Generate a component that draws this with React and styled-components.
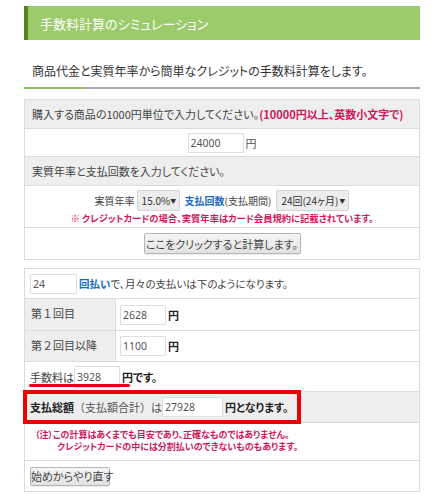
import React from 'react'
import styled, { createGlobalStyle } from 'styled-components'

const GlobalStyle = createGlobalStyle`
    body {
        margin: 0;
        background: #fff;
        font-family: "Noto Sans CJK JP", "Noto Sans", sans-serif;
        color: #444;
    }
`

function App() {
    return (
        <>
            <GlobalStyle />
            <Page>
                <Title>手数料計算のシミュレーション</Title>
                <Lead>商品代金と実質年率から簡単なクレジットの手数料計算をします。</Lead>
                <Bar />

                <Panel>
                    <Row $head $h={29}>
                        購入する商品の1000円単位で入力してください。<Warn>(10000円以上、英数小文字で)</Warn>
                    </Row>
                    <Row $center $h={28}>
                        <Field $w={56} defaultValue="24000" />
                        <Unit>円</Unit>
                    </Row>
                    <Row $head $h={29}>実質年率と支払回数を入力してください。</Row>
                    <StackRow $h={42}>
                        <Line>
                            <span>実質年率</span>
                            <SelectBox $w={43}>15.0%<Arrow>▼</Arrow></SelectBox>
                            <Period><Link>支払回数</Link>(支払期間)</Period>
                            <SelectBox $w={73}>24回(24ヶ月)<Arrow>▼</Arrow></SelectBox>
                        </Line>
                        <Note $size={9.3}>※ クレジットカードの場合、実質年率はカード会員規約に記載されています。</Note>
                    </StackRow>
                    <Row $center $h={31} $last>
                        <Button $w={157} $h={21}>ここをクリックすると計算します。</Button>
                    </Row>
                </Panel>

                <Panel $gap={8}>
                    <Row $h={30} $pad={5} $size={10.5}>
                        <Field $w={47} defaultValue="24" />
                        <Link>回払い</Link>で、月々の支払いは下のようになります。
                    </Row>
                    <SplitRow $h={32}>
                        <LabelCell>第１回目</LabelCell>
                        <ValueCell>
                            <Field $w={46} defaultValue="2628" />
                            <Strong>円</Strong>
                        </ValueCell>
                    </SplitRow>
                    <SplitRow $h={31}>
                        <LabelCell>第２回目以降</LabelCell>
                        <ValueCell>
                            <Field $w={46} defaultValue="1100" />
                            <Strong>円</Strong>
                        </ValueCell>
                    </SplitRow>
                    <Row $h={30} $pad={5}>
                        <FeeLabel>手数料は</FeeLabel>
                        <Field $w={46} $fh={22} defaultValue="3928" />
                        <Strong>円です。</Strong>
                        <Underline />
                    </Row>
                    <Row $head $h={31} $pad={5}>
                        <Strong>支払総額</Strong>
                        <Sub>（支払額合計）は</Sub>
                        <Field $w={61} defaultValue="27928" />
                        <Strong>円となります。</Strong>
                        <Frame />
                    </Row>
                    <NoteRow $h={38}>
                        <Note $left>（注）この計算はあくまでも目安であり、正確なものではありません。</Note>
                        <Note $left $indent>クレジットカードの中には分割払いのできないものもあります。</Note>
                    </NoteRow>
                    <Row $h={30} $pad={5} $last>
                        <Button $w={80} $h={19}>始めからやり直す</Button>
                    </Row>
                </Panel>
            </Page>
        </>
    )
}

export default App

const Page = styled.div`
    padding: 6px 24px 0;
    width: 396px;
`

const Title = styled.h2`
    margin: 0;
    height: 34px;
    display: flex;
    align-items: center;
    padding-left: 12px;
    background: #9ccb6b;
    border-left: 4px solid #5c7e22;
    color: #fff;
    font-size: 13px;
    font-weight: 400;
    font-feature-settings: "palt";
`

const Lead = styled.p`
    margin: 0;
    padding: 22px 8px 7px;
    font-size: 12px;
    line-height: 18px;
    color: #333;
    font-feature-settings: "palt";
`

const Bar = styled.div`
    height: 2px;
    background: linear-gradient(to right, #8cc55a 59px, #aaa 59px);
`

const Panel = styled.div`
    margin-top: ${(props) => props.$gap || 10}px;
    border: 1px solid #dcdcdc;
    font-size: 11px;
    font-feature-settings: "palt";
`

const Row = styled.div`
    position: relative;
    box-sizing: border-box;
    height: ${(props) => props.$h}px;
    display: flex;
    align-items: center;
    justify-content: ${(props) => (props.$center ? 'center' : 'flex-start')};
    padding-left: ${(props) => (props.$center ? 0 : props.$pad || 7)}px;
    background: ${(props) => (props.$head ? '#eee' : '#fff')};
    border-bottom: ${(props) => (props.$last ? 'none' : '1px solid #dcdcdc')};
    font-size: ${(props) => props.$size || 11}px;
    white-space: nowrap;
`

const StackRow = styled.div`
    box-sizing: border-box;
    height: ${(props) => props.$h}px;
    display: flex;
    flex-direction: column;
    align-items: center;
    padding-top: 3px;
    border-bottom: 1px solid #dcdcdc;
`

const NoteRow = styled.div`
    box-sizing: border-box;
    height: ${(props) => props.$h}px;
    display: flex;
    flex-direction: column;
    justify-content: center;
    padding: 0 0 2px 10px;
    border-bottom: 1px solid #dcdcdc;
`

const Line = styled.div`
    display: flex;
    align-items: center;
    height: 23px;
    font-size: 10px;
    white-space: nowrap;
`

const Period = styled.span`
    margin: 0 3px 0 5px;
`

const SplitRow = styled.div`
    box-sizing: border-box;
    height: ${(props) => props.$h}px;
    display: flex;
    border-bottom: 1px solid #dcdcdc;
`

const LabelCell = styled.div`
    width: 91px;
    flex-shrink: 0;
    display: flex;
    align-items: center;
    background: #eee;
    border-right: 1px solid #dcdcdc;
    padding: 0 0 3px 6px;
    box-sizing: border-box;
    font-feature-settings: normal;
`

const ValueCell = styled.div`
    display: flex;
    align-items: center;
    padding-left: 4px;
`

const Field = styled.input`
    box-sizing: border-box;
    width: ${(props) => props.$w}px;
    height: ${(props) => props.$fh || 20}px;
    margin: 0 2px 0 0;
    padding: 0 2px;
    border: 1px solid #dedede;
    border-radius: 1px;
    font-family: "Noto Sans", "Noto Sans CJK JP", sans-serif;
    font-size: 10.5px;
    color: #555;
    background: #fff;
    outline: none;
`

const Unit = styled.span`
    color: #555;
`

const Strong = styled.span`
    font-weight: 700;
    color: #222;
`

const Sub = styled.span`
    color: #555;
    font-feature-settings: normal;
`

const Warn = styled.span`
    color: #d0185c;
    font-weight: 700;
`

const Link = styled.span`
    color: #1a6cc0;
    font-weight: 700;
`

const SelectBox = styled.div`
    box-sizing: border-box;
    width: ${(props) => props.$w}px;
    height: 21px;
    margin-left: 2px;
    display: flex;
    align-items: center;
    justify-content: space-between;
    padding: 0 3px 0 4px;
    background: #ececec;
    border: 1px solid #d4d4d4;
    border-radius: 2px;
    font-size: 10px;
    color: #333;
    white-space: nowrap;
`

const Arrow = styled.span`
    font-size: 6px;
    color: #333;
`

const Note = styled.div`
    color: #d0185c;
    font-weight: 700;
    font-size: ${(props) => props.$size || 9}px;
    line-height: 12px;
    white-space: nowrap;
    align-self: ${(props) => (props.$left ? 'flex-start' : 'center')};
    padding-left: ${(props) => (props.$indent ? 22 : 0)}px;
    font-feature-settings: "palt";
`

const Button = styled.button`
    box-sizing: border-box;
    width: ${(props) => props.$w}px;
    height: ${(props) => props.$h}px;
    padding: 0;
    border: 1px solid #b5b5b5;
    border-radius: 2px;
    background: linear-gradient(#f5f5f5, #e2e2e2);
    box-shadow: 0 1px 1px rgba(0, 0, 0, 0.08);
    font-family: "Noto Sans CJK JP", sans-serif;
    font-size: 11px;
    font-feature-settings: "palt";
    color: #444;
`

const FeeLabel = styled.span`
    text-decoration: underline;
    text-decoration-color: #aaa;
    text-underline-offset: 2px;
`

const Underline = styled.div`
    position: absolute;
    left: 4px;
    top: 22px;
    width: 101px;
    height: 3px;
    border-radius: 2px;
    background: #e5001a;
`

const Frame = styled.div`
    position: absolute;
    left: -2px;
    top: -2px;
    width: 278px;
    height: 34px;
    box-sizing: border-box;
    border: 4px solid #ee0000;
`
